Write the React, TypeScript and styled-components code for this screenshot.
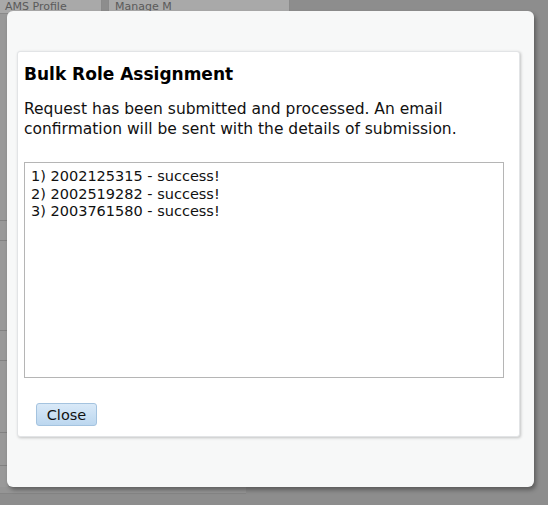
import React from "react";
import styled, { createGlobalStyle } from "styled-components";

const Global = createGlobalStyle`
  html, body { margin: 0; padding: 0; }
  body { font-family: "DejaVu Sans", Verdana, sans-serif; background: #8d8d8d; }
`;

const Page = styled.div`
  width: 548px;
  height: 505px;
  overflow: hidden;
  background: #8d8d8d;
  display: grid;
  grid-template: 1fr / 1fr;
`;

const Backdrop = styled.div`
  grid-area: 1 / 1;
  display: flex;
  flex-direction: column;
  pointer-events: none;
`;

const TabRow = styled.div`
  display: flex;
  gap: 6px;
  height: 14px;
  margin-left: -2px;
`;

const BgTab = styled.div<{ $w: number }>`
  box-sizing: border-box;
  width: ${(p) => p.$w}px;
  height: 14px;
  background: #a9a9a9;
  border: 1px solid #8a8a8a;
  border-top: none;
  font-size: 11px;
  line-height: 13px;
  color: #5a5a5a;
  padding-left: 6px;
  white-space: nowrap;
`;

const BgStrip = styled.div`
  width: 8px;
  height: 473px;
  background:
    linear-gradient(#828282, #828282) 0 206px / 8px 1px no-repeat,
    linear-gradient(#828282, #828282) 0 226px / 8px 1px no-repeat,
    linear-gradient(#828282, #828282) 0 316px / 8px 1px no-repeat,
    linear-gradient(#828282, #828282) 0 346px / 8px 1px no-repeat,
    linear-gradient(#828282, #828282) 0 418px / 8px 1px no-repeat,
    linear-gradient(#828282, #828282) 0 451px / 8px 1px no-repeat,
    #999;
`;

const BgBottom = styled.div`
  width: 246px;
  height: 6px;
  background: #959595;
  border-bottom: 1px solid #858585;
`;

const Modal = styled.div`
  grid-area: 1 / 1;
  z-index: 1;
  margin: 11px 14px 18px 7px;
  box-sizing: border-box;
  background: #f7f8f8;
  border-radius: 6px;
  box-shadow: 2px 3px 4px rgba(0, 0, 0, 0.35);
  padding: 40px 14px 50px 10px;
`;

const Card = styled.div`
  box-sizing: border-box;
  height: 386px;
  background: #fff;
  border: 1px solid #e2e4e6;
  border-radius: 3px;
  box-shadow: 1px 1px 3px rgba(0, 0, 0, 0.22);
  padding: 12px 15px 10px 6px;
  display: flex;
  flex-direction: column;
`;

const Title = styled.h2`
  margin: 0;
  font-size: 17px;
  font-weight: bold;
  line-height: 20px;
  color: #000;
`;

const Message = styled.p`
  margin: 15px 0 0;
  font-size: 15.5px;
  line-height: 20px;
  color: #111;
`;

const Results = styled.div`
  margin-top: 23px;
  box-sizing: border-box;
  height: 216px;
  border: 1px solid #b5b5b5;
  padding: 5px 6px;
  font-size: 14.5px;
  line-height: 17.5px;
  color: #111;
  display: flex;
  flex-direction: column;
`;

const ResultLine = styled.div``;

const Actions = styled.div`
  margin-top: 25px;
  padding-left: 12px;
  display: flex;
`;

const Button = styled.button`
  box-sizing: border-box;
  width: 61px;
  height: 23px;
  border: 1px solid #a4c3df;
  border-radius: 3px;
  background: linear-gradient(#d9e9f8, #bcd7ef);
  font-family: "DejaVu Sans", Verdana, sans-serif;
  font-size: 14.5px;
  color: #111;
  padding: 0;
`;

const results = [
  "1) 2002125315 - success!",
  "2) 2002519282 - success!",
  "3) 2003761580 - success!",
];

export default function App() {
  return (
    <>
      <Global />
      <Page>
        <Backdrop>
          <TabRow>
            <BgTab $w={104}>AMS Profile</BgTab>
            <BgTab $w={182}>Manage M</BgTab>
          </TabRow>
          <BgStrip />
          <BgBottom />
        </Backdrop>
        <Modal>
          <Card>
            <Title>Bulk Role Assignment</Title>
            <Message>
              Request has been submitted and processed. An email confirmation will be sent
              with the details of submission.
            </Message>
            <Results>
              {results.map((r) => (
                <ResultLine key={r}>{r}</ResultLine>
              ))}
            </Results>
            <Actions>
              <Button>Close</Button>
            </Actions>
          </Card>
        </Modal>
      </Page>
    </>
  );
}
